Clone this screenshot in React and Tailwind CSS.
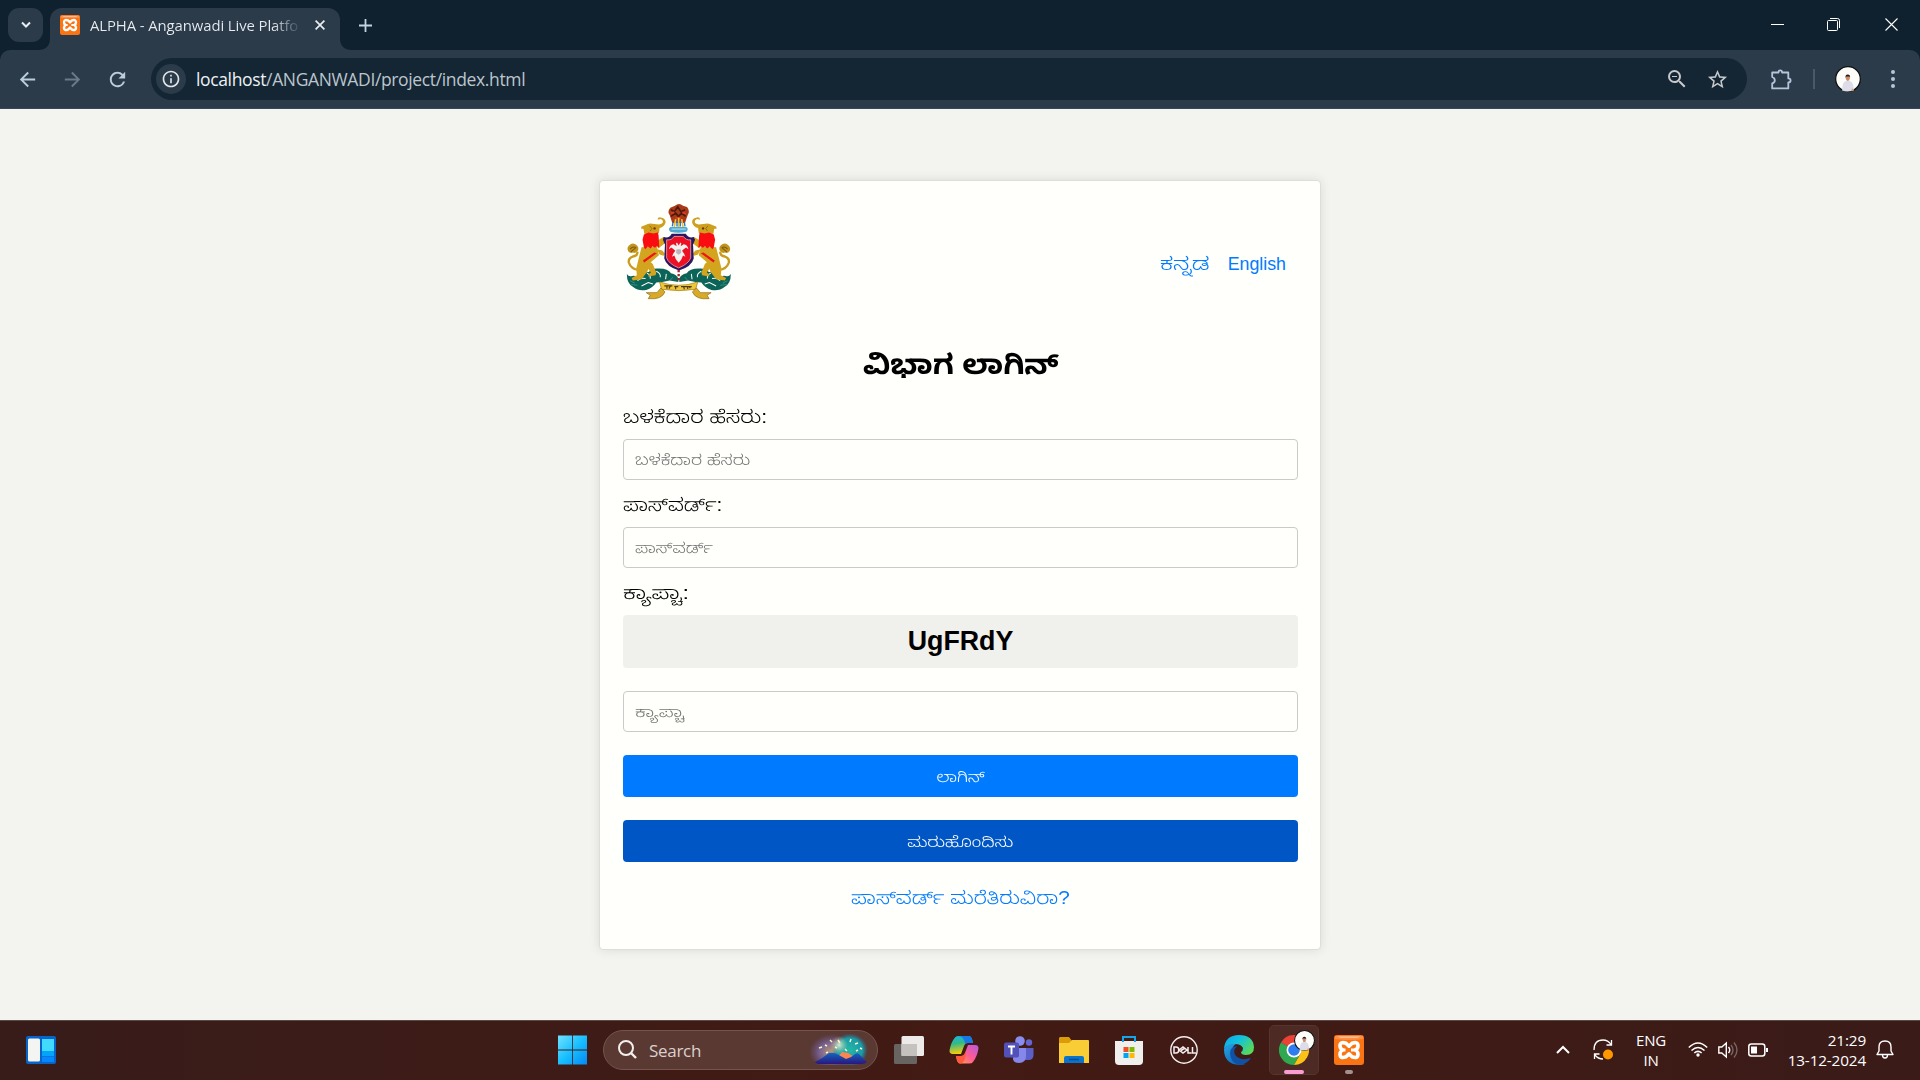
import React from "react";
import { MdArrowBack, MdArrowForward, MdRefresh, MdInfoOutline, MdZoomOut, MdStarBorder } from "react-icons/md";

function XamppIcon({ className }) {
  return (
    <svg viewBox="0 0 30 30" className={className}>
      <rect width="30" height="30" rx="3" fill="#fb7414" />
      <path d="M1 1h28v3q-14 2-28 0z" fill="#ff8f45" />
      <path d="M4 1.400h22q-1 1.400-4 1.400H8q-3 0-4-1.400z" fill="#ffc9a3" />
      <path d="M15 11.200L12 8.200Q6 6.200 6 10.800q0 3 2.600 4.200Q6 16.300 6 19.300q0 4.600 6 2.500l3-3 3 3q6 2.100 6-2.500 0-3-2.600-4.300 2.600-1.200 2.600-4.200 0-4.600-6-2.600z" fill="none" stroke="#fff" strokeWidth="3.600" strokeLinejoin="round" />
      <path d="M17 15h4.500M9 15h2.500" stroke="#fff" strokeWidth="3" />
    </svg>
  );
}

function Avatar({ className }) {
  return (
    <svg viewBox="0 0 24 24" className={className}>
      <circle cx="12" cy="12" r="11.400" fill="#fdfdfa" stroke="#111" strokeWidth="1.200" />
      <path d="M6.500 22.600Q6.800 15 9.200 14.200L11 13.400h2l1.600.8q2.400.8 2.800 8.200-5.400 2-10.900.2z" fill="#dcdde8" />
      <ellipse cx="11.800" cy="11.300" rx="1.800" ry="2.500" fill="#d28a66" />
      <path d="M9.700 11q-.3-3.200 2.100-3.200T13.900 11l-.7-1.300h-2.600z" fill="#2a1c18" />
      <path d="M15.500 21l1.800.3-.2 1.500-2 .4z" fill="#e4936e" />
    </svg>
  );
}

function Emblem() {
  const beast = (
    <g>
      <path d="M88 240q-24-2-30-22-2-14 12-18 14-2 14-14" fill="none" stroke="#c99c1c" strokeWidth="7" />
      <path d="M56 184q-6-12 6-20 10-6 20 2 8 8 2 18-8 8-14 4-8 4-14-4z" fill="#c2941c" />
      <path d="M62 178q8-10 18-4M64 186l14-12" stroke="#7a5a10" strokeWidth="3" fill="none" />
      <path d="M96 172l46-2 6 26-28 24-6 24-18 24-26 4-4-8 16-8-2-20z" fill="#d3a41e" />
      <path d="M112 214q18 2 20 14l8 20-2 8-22 4 2-8 6-4-12-16-10-8z" fill="#d3a41e" />
      <path d="M140 154l22-12 8 4-4 14-20 16zM142 178l16 4 8 10-4 6-12-4z" fill="#d3a41e" />
      <path d="M104 132l-2-14-8-2 2-6 12-4q8-6 20-4l20 2q12-2 12-8t-7-8l-9 2q0-8 9-7 15 2 15 14-2 14-18 18l-2 14-8 8z" fill="#cfa01e" />
      <circle cx="135" cy="116" r="3.500" fill="#7c2c10" />
      <path d="M120 108l7 8-5 8" stroke="#8a6814" strokeWidth="2.500" fill="none" />
      <path d="M103 134l14-6 14 3 14-3 2 10 2 36-7-5-6 5-7-5-6 7-8-6-8 8-4-6-4-22z" fill="#fa0d10" />
      <path d="M100 212l34-24 8 2-38 28z" fill="#ef1319" />
    </g>
  );
  const leaf = (
    <g>
      <path d="M52 252q6 10 16 6 10-2 16 4 16-16 34-16 8-12 30-10 28 0 36 14 18 4 22 16v10l-26-4-22 4-18 2q-10 16-30 22-24 4-38-8-20-10-20-40z" fill="#0c6458" />
      <path d="M84 272q10-10 24-6M112 250q12 4 10 16M140 244q14 6 12 18M96 288l20-10 14 4M170 252l-2 16" stroke="#fffffb" strokeWidth="3" fill="none" />
      <path d="M62 272l14 8M64 284l20 2M190 262l-8 8" stroke="#2f8c7a" strokeWidth="3" fill="none" />
    </g>
  );
  return (
    <svg viewBox="50 40 313 290" className="h-[97px] w-[105px]">
      {leaf}
      <g transform="matrix(-1 0 0 1 415 0)">{leaf}</g>
      {beast}
      <g transform="matrix(-1 0 0 1 415 0)">{beast}</g>
      <path d="M182 54q-10 12-2 22l8 24h38l8-24q8-12-2-24l-12-4q-12-10-24 0z" fill="#a83a18" />
      <path d="M184 60l10 6 10-14 10 14 12-6M184 80l14-10 8 10 10-10 12 10" stroke="#4a1a10" strokeWidth="5" fill="none" />
      <path d="M184 70l10-2M218 68l10 4M198 84l16 2" stroke="#e53a1c" strokeWidth="5" />
      <path d="M198 88l-4 24M216 88l4 24M207 84v28" stroke="#efbe34" strokeWidth="5" fill="none" />
      <path d="M190 98l-2 12M224 98l2 12M202 94v16M212 94v16" stroke="#2878c0" strokeWidth="4" />
      <path d="M182 112h48q8 6 0 14-24 6-48 0-8-8 0-14z" fill="#4fa9d2" />
      <path d="M186 118h42" stroke="#9ad8ec" strokeWidth="4" />
      <path d="M162 142q18 4 24-10h42q8 14 24 10l4 8-6 14 2 42q-6 24-44 36-38-12-44-36l2-42-6-14z" fill="#2e1560" />
      <path d="M171 150q16 2 22-10h28q8 12 22 10v54q-6 18-36 30-30-12-36-30z" fill="#ed1024" stroke="#f3c8b5" strokeWidth="2" />
      <path d="M178 178q2-14 14-15l9 6-2-8 3-3 5 9 5-9 3 3-2 8 9-6q12 1 14 15l-7-5-7 5-5 5 6 8 4 10-7-4-5 12-8 10-8-10-5-12-7 4 4-10 6-8-5-5-7-5z" fill="#f2f1ee" />
      <path d="M201 178l12 0 2 11-8 6-8-6z" fill="#b9b3bd" />
      <path d="M207 240v34" stroke="#a02030" strokeWidth="7" strokeDasharray="7 5" />
      <path d="M150 276q58 20 114 0l-6 22q-50 8-102 0z" fill="#efc53a" stroke="#9a7613" strokeWidth="2" />
      <path d="M164 288h24M172 288v8M182 288l-4 8M194 290h12M198 290v8M214 290h32M222 290l2 8M234 289v8M242 289l-2 6" stroke="#4c3b10" strokeWidth="3.500" fill="none" />
      <path d="M154 294l-12 14-32 0 12 8-6 10q40 4 50-20zM260 294l12 14 32 0-12 8 6 10q-40 4-50-20z" fill="#d9aa28" stroke="#8b6913" strokeWidth="2" />
    </svg>
  );
}

function BrowserHeader() {
  return (
    <header className="h-[109px] bg-[#0f212f] font-['Open_Sans',sans-serif]">
      <div className="flex h-[50px] items-start">
        <button className="ml-[8px] mt-[8px] flex h-[34px] w-[35px] items-center justify-center rounded-[11px] bg-[#2b3b4a]">
          <svg viewBox="0 0 12 8" className="h-[8px] w-[12px]"><path d="M2 1.500l4 4 4-4" fill="none" stroke="#e8edf2" strokeWidth="2" /></svg>
        </button>
        <div className="relative ml-[7px] mt-[8px] flex h-[42px] w-[290px] items-center rounded-t-[12px] bg-[#2b3b4a] pb-[8px]">
          <svg viewBox="0 0 12 12" className="absolute -left-[12px] bottom-0 h-[12px] w-[12px]"><path d="M12 0v12H0Q12 12 12 0z" fill="#2b3b4a" /></svg>
          <svg viewBox="0 0 12 12" className="absolute -right-[12px] bottom-0 h-[12px] w-[12px]"><path d="M0 0v12h12Q0 12 0 0z" fill="#2b3b4a" /></svg>
          <XamppIcon className="ml-[10px] h-[20px] w-[20px]" />
          <div className="ml-[10px] w-[208px] whitespace-nowrap bg-gradient-to-r from-[#e9edf1] from-88% to-[#2b3b4a] to-102% bg-clip-text text-[14.900px] leading-[22px] tracking-[-0.100px] text-transparent">ALPHA - Anganwadi Live Platfo</div>
          <svg viewBox="0 0 10 10" className="ml-[17px] h-[10px] w-[10px]"><path d="M.6.6l8.800 8.800M9.400.6L.6 9.400" stroke="#e9edf1" strokeWidth="1.700" /></svg>
        </div>
        <svg viewBox="0 0 13 13" className="ml-[19px] mt-[19px] h-[13px] w-[13px]"><path d="M6.500 0v13M0 6.500h13" stroke="#c2d3e2" strokeWidth="1.800" /></svg>
        <div className="ml-auto mr-[22px] mt-[18px] flex h-[13px] items-center">
          <div className="h-px w-[13px] bg-white" />
          <svg viewBox="0 0 13 13" className="ml-[43px] h-[13px] w-[13px]"><rect x=".5" y="2.500" width="10" height="10" rx="1" fill="none" stroke="#fff" /><path d="M3 .5h7.500a2 2 0 0 1 2 2V10" fill="none" stroke="#fff" /></svg>
          <svg viewBox="0 0 13 13" className="ml-[45px] h-[13px] w-[13px]"><path d="M.5.5l12 12M12.500.5l-12 12" stroke="#fff" strokeWidth="1.100" /></svg>
        </div>
      </div>
      <div className="flex h-[59px] items-center rounded-t-[10px] border-b border-[#3a4654] bg-[#2b3b4a]">
        <MdArrowBack className="ml-[16px] h-[23px] w-[23px] text-[#bccddc]" />
        <MdArrowForward className="ml-[22px] h-[23px] w-[23px] text-[#6c7a89]" />
        <MdRefresh className="ml-[22px] h-[23px] w-[23px] text-[#bccddc]" />
        <div className="ml-[22px] flex h-[42px] w-[1596px] items-center rounded-full bg-[#142634]">
          <div className="ml-[5px] flex h-[30px] w-[30px] items-center justify-center rounded-full bg-[#2b3b4a]">
            <MdInfoOutline className="h-[20px] w-[20px] text-[#e2e5e8]" />
          </div>
          <div className="ml-[10px] whitespace-nowrap text-[17.500px] leading-[24px] tracking-[-0.360px] text-[#bcc5cc]"><span className="text-[#eef1f3]">localhost</span>/ANGANWADI/project/index.html</div>
          <MdZoomOut className="ml-auto h-[24px] w-[24px] text-[#c7c9cc]" />
          <MdStarBorder className="ml-[17px] mr-[18px] h-[23px] w-[23px] text-[#c7c9cc]" />
        </div>
        <svg viewBox="0 0 21 21" className="ml-[24px] h-[21px] w-[21px]"><path d="M1.200 3.500h6.300Q7.500 1.300 9.300 1.300t1.800 2.200h6.200v5.900q2.300 0 2.300 2t-2.300 2v6H1.200v-5q2.600-.8 2.600-3.200t-2.600-3.200z" fill="none" stroke="#b5c6dc" strokeWidth="1.800" strokeLinejoin="round" /></svg>
        <div className="ml-[21px] h-[20px] w-[2px] bg-[#485968]" />
        <Avatar className="ml-[20px] h-[26px] w-[26px]" />
        <svg viewBox="0 0 4 18" className="ml-[30px] h-[18px] w-[4px] fill-[#b5c6dc]"><circle cx="2" cy="2" r="2" /><circle cx="2" cy="9" r="2" /><circle cx="2" cy="16" r="2" /></svg>
      </div>
    </header>
  );
}

const INPUT = "flex h-[41px] items-center rounded-[4px] border border-[#cacbc8] px-[11px] pt-[1px] text-[14.900px] font-[350] text-[#757575]";
const LABEL = "flex h-[26px] items-center text-[17.900px] font-[350]";
const LEFT = "inline-block origin-left scale-x-[1.18]";
const NARROW = "inline-block origin-left scale-x-[1.160]";
const WIDE = "inline-block origin-left scale-x-[1.310]";

function LoginCard() {
  return (
    <main className="flex h-[911px] justify-center bg-[#f3f4f0] font-['Liberation_Sans','Noto_Sans_Kannada',sans-serif] text-black">
      <section className="mt-[71px] flex h-[770px] w-[722px] flex-col whitespace-nowrap rounded-[4px] border border-[#dddedb] bg-[#fffffb] pl-[23px] pr-[22px] shadow-[0_0_11px_rgba(0,0,0,0.1)]">
        <div className="flex h-[124px] items-start pl-[3px] pt-[22px]">
          <Emblem />
          <nav className="ml-auto mr-[12px] mt-[50px] flex items-center text-[17.800px] leading-[22px] text-[#007bff]">
            <a className="w-[51px] font-[350]"><span className="inline-block origin-left scale-x-[1.340]">ಕನ್ನಡ</span></a>
            <a className="ml-[17px]">English</a>
          </nav>
        </div>
        <h2 className="mt-[40px] flex h-[40px] items-center justify-center text-[27.800px] font-bold"><span className="inline-block scale-x-[1.09]">ವಿಭಾಗ ಲಾಗಿನ್</span></h2>
        <label className={LABEL + " mt-[19px]"}><span className={LEFT}>ಬಳಕೆದಾರ ಹೆಸರು:</span></label>
        <div className={INPUT + " mt-[9px]"}><span className={LEFT}>ಬಳಕೆದಾರ ಹೆಸರು</span></div>
        <label className={LABEL + " mt-[12px]"}><span className={NARROW}>ಪಾಸ್‌ವರ್ಡ್:</span></label>
        <div className={INPUT + " mt-[9px]"}><span className={NARROW}>ಪಾಸ್‌ವರ್ಡ್</span></div>
        <label className={LABEL + " mt-[12px]"}><span className={WIDE}>ಕ್ಯಾಪ್ಚಾ:</span></label>
        <div className="mt-[9px] flex h-[53px] items-center justify-center rounded-[4px] bg-[#f0f0ed] pb-[1px] text-[26.800px] font-bold">UgFRdY</div>
        <div className={INPUT + " mt-[23px]"}><span className={WIDE}>ಕ್ಯಾಪ್ಚಾ</span></div>
        <button className="mt-[23px] h-[42px] rounded-[4px] bg-[#007bff] pt-[2px] text-[14.900px] font-[350] text-white"><span className="inline-block scale-x-[1.170]">ಲಾಗಿನ್</span></button>
        <button className="mt-[23px] h-[42px] rounded-[4px] bg-[#0056c4] pt-[2px] text-[14.900px] font-[350] text-white"><span className="inline-block scale-x-[1.2]">ಮರುಹೊಂದಿಸು</span></button>
        <a className="mt-[23px] flex h-[26px] items-center justify-center text-[17.900px] font-[350] text-[#007bff]"><span className="inline-block scale-x-[1.160]">ಪಾಸ್‌ವರ್ಡ್ ಮರೆತಿರುವಿರಾ?</span></a>
      </section>
    </main>
  );
}

function WidgetsIcon() {
  return (
    <svg viewBox="0 0 30 28" className="ml-[26px] h-[28px] w-[30px]">
      <rect width="30" height="28" rx="2" fill="#0864c8" />
      <rect x="2" y="2.500" width="12" height="23" rx="1.500" fill="#f4f4f2" />
      <path d="M16 3h12v12H16z" fill="#42d9ff" /><path d="M16 15h12v5H16z" fill="#05a4fb" /><path d="M16 20.500h12V26H16z" fill="#0588fb" />
    </svg>
  );
}

function SearchArt() {
  return (
    <svg viewBox="0 0 58 31" className="ml-auto mr-[9px] h-[31px] w-[58px]">
      <defs>
        <radialGradient id="sa" cx=".5" cy=".5" r=".5"><stop offset="0" stopColor="#c0a070" /><stop offset=".55" stopColor="#7d68a2" stopOpacity=".85" /><stop offset="1" stopColor="#6b5390" stopOpacity="0" /></radialGradient>
        <radialGradient id="sb" cx=".5" cy=".5" r=".5"><stop offset="0" stopColor="#25b7a4" /><stop offset=".7" stopColor="#12a6b4" stopOpacity=".9" /><stop offset="1" stopColor="#2c6b90" stopOpacity="0" /></radialGradient>
        <radialGradient id="sd" cx=".5" cy=".5" r=".5"><stop offset="0" stopColor="#fffbe0" /><stop offset="1" stopColor="#e0d080" stopOpacity="0" /></radialGradient>
        <linearGradient id="sc" x2="0" y2="1"><stop offset="0" stopColor="#1268c0" /><stop offset="1" stopColor="#2b157f" /></linearGradient>
      </defs>
      <ellipse cx="22" cy="18" rx="23" ry="18" fill="url(#sa)" /><ellipse cx="40" cy="16" rx="18" ry="17" fill="url(#sb)" />
      <circle cx="29" cy="11" r="9" fill="url(#sd)" opacity=".8" /><path d="M28 23l4-5 6 1 8 5-9 6z" fill="#ff8550" />
      <path d="M5 28q8-4 14-9 4-1 8 1l9 5q5-1 9-5 3-2 5 1l7 7q-2 2-6 2H10q-4 0-5-2z" fill="url(#sc)" />
      <path d="M9 14l3-1M15 11l2 1M20 6l2 2M28 6l2 3M41 5l-1 3M45 10l3-1M50 14l2 1M16 19l2-1M46 17l2-1M35 15l2 2M25 13l2 1" stroke="#fff6c8" strokeWidth="1.500" />
    </svg>
  );
}

function Copilot() {
  return (
    <svg viewBox="0 0 30 28" className="h-[28px] w-[30px]">
      <defs>
        <linearGradient id="ca" x1="0" y1="0" x2=".2" y2="1"><stop stopColor="#16b8e8" /><stop offset=".45" stopColor="#33b987" /><stop offset="1" stopColor="#f4ce0c" /></linearGradient>
        <linearGradient id="cb" x1="1" y1="0" x2="0" y2="1"><stop stopColor="#b35ae0" /><stop offset=".5" stopColor="#ff5b93" /><stop offset="1" stopColor="#ffa64d" /></linearGradient>
      </defs>
      <path d="M6 1.500Q7 0 9 0h11q2 0 3 3l1 4h-5q-3 0-4 3l-3 8H4q-4 0-3.400-4Q2 6 6 1.500z" fill="url(#ca)" />
      <path d="M9 0h11q2 0 3 3l1 4h-5q-2 0-3 1Q15 0 9 0z" fill="#1678e8" />
      <path d="M24 26q-1 1.500-4 1.500h-9q-2 0-3-3L7 20h5q3 0 4-3l3-8h7q4 0 3.400 4Q28 21 24 26z" fill="url(#cb)" />
      <path d="M7 20h5q3 0 4-3l1-2q0 12-6 12.500-2 0-3-3z" fill="#ff5a3c" />
    </svg>
  );
}

function Teams() {
  return (
    <svg viewBox="0 0 30 28" className="h-[28px] w-[30px]">
      <circle cx="16" cy="5" r="4.800" fill="#8a8df0" /><circle cx="25" cy="6.500" r="3.200" fill="#6366d2" />
      <path d="M20 12h9.500v7q0 5-5 5H20z" fill="#5b5fc7" /><path d="M9 12h13v8q0 7-7 7t-6-7z" fill="#8588ea" />
      <rect x="0" y="6.500" width="15" height="15" rx="2" fill="#5151b8" />
      <path d="M4 10.500h7M7.500 10.500v8" stroke="#fff" strokeWidth="1.900" />
    </svg>
  );
}

function Explorer() {
  return (
    <svg viewBox="0 0 30 28" className="h-[28px] w-[30px]">
      <path d="M1 1h9l3 4-3 4H0V2z" fill="#dc9c08" /><path d="M0 7h10l3-3h16q1 0 1 1v22H0z" fill="#f9cd35" />
      <path d="M5 27v-5q0-2 2-2h16q2 0 2 2v5z" fill="#0a74cc" /><path d="M10 23.500h10" stroke="#064a92" strokeWidth="1.500" />
    </svg>
  );
}

function Store() {
  return (
    <svg viewBox="0 0 30 30" className="h-[30px] w-[30px]">
      <path d="M9 8V2h12v6" fill="none" stroke="#16a5e8" strokeWidth="2" /><path d="M1 6h28v20q0 4-4 4H5q-4 0-4-4z" fill="#efefee" />
      <path d="M8 5h2v2H8zM20 5h2v2h-2z" fill="#16a5e8" />
      <path d="M9.500 12h5v5h-5z" fill="#f25022" /><path d="M15.500 12h5v5h-5z" fill="#7fba00" /><path d="M9.500 18h5v5h-5z" fill="#00a4ef" /><path d="M15.500 18h5v5h-5z" fill="#ffb900" />
    </svg>
  );
}

function Dell() {
  return (
    <svg viewBox="0 0 30 30" className="h-[30px] w-[30px]" fill="none" stroke="#f5f0ee">
      <circle cx="15" cy="15" r="13.200" strokeWidth="1.400" />
      <path d="M5 12v6h2q2.800 0 2.800-3T7 12zM10 15l4-3 4 3-4 3zM12 15.500l4-2.500M19 12v6h3.500M23.500 12v6H27" strokeWidth="1.500" />
    </svg>
  );
}

function Edge() {
  return (
    <svg viewBox="0 0 30 30" className="h-[30px] w-[30px]">
      <defs>
        <linearGradient id="ea" x1="0" y1="0" x2="1" y2=".6"><stop stopColor="#10a6ee" /><stop offset=".5" stopColor="#12c3dc" /><stop offset="1" stopColor="#58d95b" /></linearGradient>
        <linearGradient id="eb" x1="0" y1="0" x2=".7" y2="1"><stop stopColor="#25a7e5" /><stop offset="1" stopColor="#0c62b8" /></linearGradient>
      </defs>
      <path d="M0 14Q1 0 15 0q14 0 15 12 0 8-8 8-5 0-5-3 2-1 2-4-2-4-8-4Q4 9 0 14z" fill="url(#ea)" />
      <path d="M0 14Q4 8 12 9q-4 2-4 8 1 12 14 12-4 1-7 1Q0 29 0 14z" fill="url(#eb)" />
      <path d="M13 11q-5 5-1 10 5 5 15 2-5 7-12 7Q6 27 6 18q0-6 7-7z" fill="#1151a4" />
    </svg>
  );
}

function Chrome() {
  return (
    <svg viewBox="0 0 30 30" className="h-[30px] w-[30px]">
      <path d="M15 15L2 7.500A15 15 0 0 1 28 7.500H15z" fill="#ea4335" /><path d="M15 15L2 7.500A15 15 0 0 0 15 30l6.500-11.200z" fill="#2fa84f" /><path d="M15 7.500h13A15 15 0 0 1 15 30l6.500-11.200z" fill="#fbc116" />
      <circle cx="15" cy="15" r="7.500" fill="#fff" /><circle cx="15" cy="15" r="5.800" fill="#2f7cf0" />
    </svg>
  );
}

function Taskbar() {
  return (
    <footer className="flex h-[60px] items-center border-t border-[#5b4a44] bg-gradient-to-r from-[#371c1a] via-[#431a14] to-[#3a1b18] pb-[2px] font-['Open_Sans',sans-serif] text-white">
      <div className="flex w-[558px] items-center"><WidgetsIcon /></div>
      <svg viewBox="0 0 30 30" className="h-[30px] w-[30px]">
        <defs><linearGradient id="wa" x2="1" y2="1"><stop stopColor="#6fe2ff" /><stop offset=".5" stopColor="#18bfff" /><stop offset="1" stopColor="#0588f4" /></linearGradient></defs>
        <path d="M0 .5h14.200v14H0zM15 .5h14v14H15zM0 15.500h14.200v14H0zM15 15.500h14v14H15z" fill="url(#wa)" />
      </svg>
      <div className="ml-[15px] flex h-[40px] w-[275px] items-center rounded-full border border-[#75544e] bg-[#5a3932]">
        <svg viewBox="0 0 19 19" className="ml-[14px] h-[19px] w-[19px]" fill="none" stroke="#f2efee" strokeWidth="2"><circle cx="8" cy="8" r="7" /><path d="M13 13l5 5" strokeWidth="2.400" /></svg>
        <span className="ml-[12px] pt-[2px] text-[17px] leading-[24px] tracking-[-0.300px] text-[#dcd0cd]">Search</span>
        <SearchArt />
      </div>
      <svg viewBox="0 0 30 28" className="ml-[16px] h-[28px] w-[30px]"><rect x="0" y="8" width="23" height="20" rx="1.500" fill="#686461" /><rect x="7.500" y="0" width="22.500" height="20" rx="1.500" fill="#ecebea" /><path d="M7.500 8H23v12H7.500z" fill="#c4c1bf" /></svg>
      <div className="ml-[25px] flex items-center gap-[25px]">
        <Copilot /><Teams /><Explorer /><Store /><Dell /><Edge />
      </div>
      <div className="relative ml-[15px] flex h-[50px] w-[50px] items-center justify-center rounded-[5px] border border-[#56342f] bg-[#4e2a25]">
        <Chrome />
        <Avatar className="absolute right-[3px] top-[4px] h-[21px] w-[21px]" />
        <div className="absolute bottom-0 left-[14px] h-[4px] w-[20px] rounded-full bg-[#fa9bd3]" />
      </div>
      <div className="relative ml-[15px]">
        <XamppIcon className="h-[30px] w-[30px]" />
        <div className="absolute -bottom-[9px] left-[11px] h-[4px] w-[8px] rounded-full bg-[#a3918d]" />
      </div>
      <svg viewBox="0 0 14 9" className="ml-auto h-[9px] w-[14px]"><path d="M1 8l6-6 6 6" stroke="#fff" strokeWidth="2" fill="none" /></svg>
      <svg viewBox="0 0 20 21" className="ml-[23px] h-[21px] w-[20px]" fill="none" stroke="#fff" strokeWidth="1.300"><path d="M1 11Q1 1 10 1q5 0 8 4.500M18.500 1v5h-5M1.500 20v-5h5M2 16q3 4 8 4" /><circle cx="15" cy="15.500" r="5" fill="#ff9800" stroke="none" /></svg>
      <div className="ml-[23px] w-[30px] text-center text-[15px] leading-[20px] tracking-[-0.200px]">ENG<br />IN</div>
      <svg viewBox="0 0 20 15" className="ml-[22px] h-[15px] w-[20px]" fill="none" stroke="#fff" strokeWidth="1.500"><path d="M.8 5.500q9.200-9 18.400 0M3.500 8.500q6.500-6 13 0M6.300 11q3.700-3.200 7.400 0" /><circle cx="10" cy="13" r="1.700" fill="#fff" stroke="none" /></svg>
      <svg viewBox="0 0 20 18" className="ml-[10px] h-[18px] w-[20px]" fill="none" stroke="#fff" strokeWidth="1.400"><path d="M.8 6h3l4.500-4v14l-4.500-4h-3zM10.500 6q2.500 3 0 6" /><path d="M13 4q4 5 0 10M16 1.500q6 7.500 0 15" stroke="#7b6360" /></svg>
      <svg viewBox="0 0 20 14" className="ml-[10px] h-[14px] w-[20px]"><rect x=".8" y="1" width="16" height="12" rx="2.500" fill="none" stroke="#fff" strokeWidth="1.500" /><path d="M3 3.500h6v7H3zM18 5h2v4h-2z" fill="#fff" /></svg>
      <div className="ml-[17px] w-[81px] whitespace-nowrap text-right text-[15.300px] leading-[20px] tracking-[-0.150px]">21:29<br />13-12-2024</div>
      <svg viewBox="0 0 18 19" className="ml-[10px] mr-[26px] h-[19px] w-[18px]" fill="none" stroke="#fff" strokeWidth="1.400"><path d="M1 14.500l2-3.500V7q0-6 6-6t6 6v4l2 3.500zM6.500 15q0 3 2.500 3t2.500-3" strokeLinejoin="round" /></svg>
    </footer>
  );
}

export default function App() {
  return (
    <div className="h-[1080px] w-[1920px] overflow-hidden">
      <BrowserHeader />
      <LoginCard />
      <Taskbar />
    </div>
  );
}
